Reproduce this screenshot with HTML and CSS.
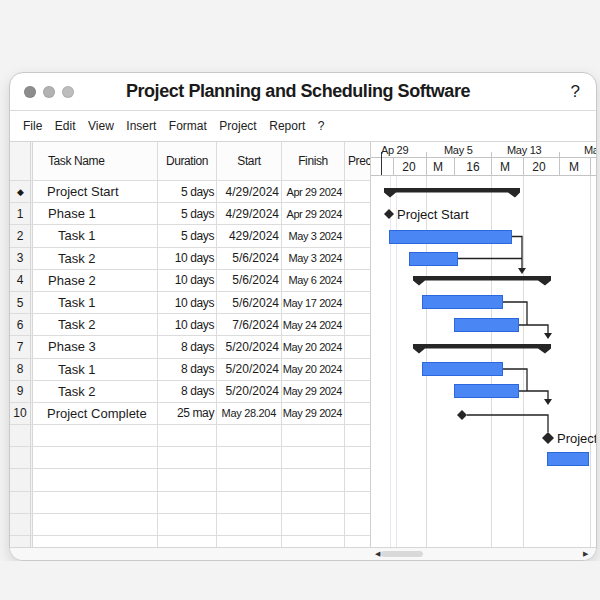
FILE: index.html
```html
<!DOCTYPE html>
<html lang="en">
<head>
  <meta charset="UTF-8">
  <title>Project Planning and Scheduling Software</title>
  <link rel="stylesheet" href="styles.css">
</head>
<body>
  <div class="window">
    <div class="titlebar">
      <div class="lights">
        <span class="dot dot-1"></span>
        <span class="dot dot-2"></span>
        <span class="dot dot-3"></span>
      </div>
      <div class="title">Project Planning and Scheduling Software</div>
      <div class="help">?</div>
    </div>

    <div class="menubar">
      <span>File</span>
      <span>Edit</span>
      <span>View</span>
      <span>Insert</span>
      <span>Format</span>
      <span>Project</span>
      <span>Report</span>
      <span>?</span>
    </div>

    <div class="main">
      <!-- task sheet -->
      <div class="sheet">
        <div class="row head">
          <div class="c num"></div>
          <div class="c name">Task Name</div>
          <div class="c ctr">Duration</div>
          <div class="c ctr">Start</div>
          <div class="c ctr">Finish</div>
          <div class="c prec">Prec</div>
        </div>
        <div class="row">
          <div class="c num"><span class="mark">◆</span></div>
          <div class="c name l0">Project Start</div>
          <div class="c dur">5 days</div>
          <div class="c start">4/29/2024</div>
          <div class="c fin">Apr 29 2024</div>
          <div class="c prec"></div>
        </div>
        <div class="row">
          <div class="c num">1</div>
          <div class="c name l1">Phase 1</div>
          <div class="c dur">5 days</div>
          <div class="c start">4/29/2024</div>
          <div class="c fin">Apr 29 2024</div>
          <div class="c prec"></div>
        </div>
        <div class="row">
          <div class="c num">2</div>
          <div class="c name l2">Task 1</div>
          <div class="c dur">5 days</div>
          <div class="c start">429/2024</div>
          <div class="c fin">May 3 2024</div>
          <div class="c prec"></div>
        </div>
        <div class="row">
          <div class="c num">3</div>
          <div class="c name l2">Task 2</div>
          <div class="c dur">10 days</div>
          <div class="c start">5/6/2024</div>
          <div class="c fin">May 3 2024</div>
          <div class="c prec"></div>
        </div>
        <div class="row">
          <div class="c num">4</div>
          <div class="c name l1">Phase 2</div>
          <div class="c dur">10 days</div>
          <div class="c start">5/6/2024</div>
          <div class="c fin">May 6 2024</div>
          <div class="c prec"></div>
        </div>
        <div class="row">
          <div class="c num">5</div>
          <div class="c name l2">Task 1</div>
          <div class="c dur">10 days</div>
          <div class="c start">5/6/2024</div>
          <div class="c fin">May 17 2024</div>
          <div class="c prec"></div>
        </div>
        <div class="row">
          <div class="c num">6</div>
          <div class="c name l2">Task 2</div>
          <div class="c dur">10 days</div>
          <div class="c start">7/6/2024</div>
          <div class="c fin">May 24 2024</div>
          <div class="c prec"></div>
        </div>
        <div class="row">
          <div class="c num">7</div>
          <div class="c name l1">Phase 3</div>
          <div class="c dur">8 days</div>
          <div class="c start">5/20/2024</div>
          <div class="c fin">May 20 2024</div>
          <div class="c prec"></div>
        </div>
        <div class="row">
          <div class="c num">8</div>
          <div class="c name l2">Task 1</div>
          <div class="c dur">8 days</div>
          <div class="c start">5/20/2024</div>
          <div class="c fin">May 20 2024</div>
          <div class="c prec"></div>
        </div>
        <div class="row">
          <div class="c num">9</div>
          <div class="c name l2">Task 2</div>
          <div class="c dur">8 days</div>
          <div class="c start">5/20/2024</div>
          <div class="c fin">May 29 2024</div>
          <div class="c prec"></div>
        </div>
        <div class="row">
          <div class="c num">10</div>
          <div class="c name l0">Project Complete</div>
          <div class="c dur">25 may</div>
          <div class="c start small">May 28.204</div>
          <div class="c fin">May 29 2024</div>
          <div class="c prec"></div>
        </div>
        <div class="row"><div class="c num"></div><div class="c name"></div><div class="c dur"></div><div class="c start"></div><div class="c fin"></div><div class="c prec"></div></div>
        <div class="row"><div class="c num"></div><div class="c name"></div><div class="c dur"></div><div class="c start"></div><div class="c fin"></div><div class="c prec"></div></div>
        <div class="row"><div class="c num"></div><div class="c name"></div><div class="c dur"></div><div class="c start"></div><div class="c fin"></div><div class="c prec"></div></div>
        <div class="row"><div class="c num"></div><div class="c name"></div><div class="c dur"></div><div class="c start"></div><div class="c fin"></div><div class="c prec"></div></div>
        <div class="row"><div class="c num"></div><div class="c name"></div><div class="c dur"></div><div class="c start"></div><div class="c fin"></div><div class="c prec"></div></div>
        <div class="row"><div class="c num"></div><div class="c name"></div><div class="c dur"></div><div class="c start"></div><div class="c fin"></div><div class="c prec"></div></div>
      </div>

      <!-- gantt chart -->
      <div class="gantt">
        <svg width="226" height="405" viewBox="0 0 226 405">
          <!-- timescale -->
          <g class="scale-top">
            <text x="10" y="12">Ap 29</text>
            <text x="73" y="12">May 5</text>
            <text x="136" y="12">May 13</text>
            <text x="213" y="12">Ma</text>
          </g>
          <g stroke="#c4c4c4" stroke-width="1">
            <line x1="0" y1="15.5" x2="226" y2="15.5"/>
            <line x1="0" y1="33.5" x2="226" y2="33.5"/>
            <line x1="55.5" y1="10" x2="55.5" y2="33"/>
            <line x1="120.5" y1="10" x2="120.5" y2="33"/>
            <line x1="188.5" y1="10" x2="188.5" y2="33"/>
            <line x1="22.5" y1="16" x2="22.5" y2="33"/>
            <line x1="83.5" y1="16" x2="83.5" y2="33"/>
            <line x1="152.5" y1="16" x2="152.5" y2="33"/>
            <line x1="219.5" y1="16" x2="219.5" y2="33"/>
          </g>
          <line x1="10.5" y1="10" x2="10.5" y2="33" stroke="#333" stroke-width="1"/>
          <g class="scale-bot" text-anchor="middle">
            <text x="38" y="29">20</text>
            <text x="67" y="29">M</text>
            <text x="102" y="29">16</text>
            <text x="134" y="29">M</text>
            <text x="168" y="29">20</text>
            <text x="203" y="29">M</text>
          </g>

          <!-- grid -->
          <g stroke-width="1">
            <line x1="19.5" y1="34" x2="19.5" y2="405" stroke="#e6e8ee"/>
            <line x1="25.5" y1="34" x2="25.5" y2="405" stroke="#e6e8ee"/>
            <line x1="55.5" y1="34" x2="55.5" y2="405" stroke="#dcdcdc"/>
            <line x1="120.5" y1="34" x2="120.5" y2="405" stroke="#dcdcdc"/>
            <line x1="152.5" y1="34" x2="152.5" y2="405" stroke="#dcdcdc"/>
            <line x1="219.5" y1="34" x2="219.5" y2="405" stroke="#dcdcdc"/>
          </g>

          <!-- summaries -->
          <g fill="#262626">
            <path d="M13 46 H149 V50.5 L144 55.5 L137 50.5 H25 L19 55.5 L13 50.5 Z"/>
            <path d="M42 134 H180 V138.5 L174 143.5 L167 138.5 H54 L48 143.5 L42 138.5 Z"/>
            <path d="M42 202 H180 V206.5 L174 211.5 L167 206.5 H54 L48 211.5 L42 206.5 Z"/>
          </g>

          <!-- milestones -->
          <path d="M18 67 L23 72 L18 77 L13 72 Z" fill="#262626"/>
          <text class="lbl" x="26" y="77">Project Start</text>

          <!-- links -->
          <g fill="none" stroke="#222" stroke-width="1.3">
            <path d="M141 94.5 H151 V127"/>
            <path d="M87 116.5 H151"/>
            <path d="M132 160 H156 V183"/>
            <path d="M148 183 H177 V192"/>
            <path d="M132 227 H156 V249"/>
            <path d="M148 249 H177 V258"/>
            <path d="M96 273 H177 V290"/>
          </g>
          <g fill="#222">
            <path d="M147 126 H155 L151 132 Z"/>
            <path d="M173 191 H181 L177 197 Z"/>
            <path d="M173 257 H181 L177 263 Z"/>
          </g>

          <!-- task bars -->
          <g fill="#4a86f4" stroke="#2b68de" stroke-width="1">
            <rect x="18.5" y="88.5" width="122" height="13"/>
            <rect x="38.5" y="110.5" width="48" height="13"/>
            <rect x="51.5" y="153.5" width="80" height="13"/>
            <rect x="83.5" y="176.5" width="64" height="13"/>
            <rect x="51.5" y="220.5" width="80" height="13"/>
            <rect x="83.5" y="242.5" width="64" height="13"/>
            <rect x="176.5" y="310.5" width="41" height="13"/>
          </g>

          <path d="M91 268 L96 273 L91 278 L86 273 Z" fill="#262626"/>
          <path d="M177 290 L183 296 L177 302 L171 296 Z" fill="#262626"/>
          <text class="lbl" x="186" y="301">Project</text>
        </svg>
      </div>
    </div>

    <div class="footer">
      <div class="footer-left"></div>
      <div class="hscroll">
        <span class="arrow">◀</span>
        <span class="thumb"></span>
        <span class="track"></span>
        <span class="arrow">▶</span>
      </div>
    </div>
  </div>
</body>
</html>
```

FILE: styles.css
```css
body {
  margin: 0;
  background: #f3f3f3;
  font-family: "Liberation Sans", Arial, sans-serif;
  color: #1b1b1b;
}
.window {
  box-sizing: border-box;
  width: 588px;
  height: 489px;
  margin: 72px 0 0 9px;
  background: #fff;
  border: 1px solid #c9c9c9;
  border-radius: 14px;
  box-shadow: 0 5px 14px rgba(0, 0, 0, 0.13);
  overflow: hidden;
  display: flex;
  flex-direction: column;
}

/* title bar */
.titlebar {
  box-sizing: border-box;
  height: 38px;
  border-bottom: 1px solid #dadada;
  display: grid;
  grid-template-columns: 76px 1fr 86px;
  align-items: center;
  flex-shrink: 0;
}
.lights {
  display: flex;
  gap: 7px;
  padding-left: 14px;
}
.dot {
  width: 12px;
  height: 12px;
  border-radius: 50%;
  box-shadow: inset 0 0 0 1px rgba(0, 0, 0, 0.08);
}
.dot-1 { background: #8d8d8d; }
.dot-2 { background: #b2b2b2; }
.dot-3 { background: #bdbdbd; }
.title {
  text-align: center;
  font-size: 18px;
  font-weight: bold;
  letter-spacing: -0.45px;
  color: #1a1a1a;
}
.help {
  text-align: right;
  padding-right: 16px;
  font-size: 17px;
  color: #222;
}

/* menu */
.menubar {
  box-sizing: border-box;
  height: 31px;
  border-bottom: 1px solid #d6d6d6;
  display: flex;
  align-items: center;
  gap: 12.5px;
  padding-left: 13px;
  font-size: 12px;
  color: #222;
  flex-shrink: 0;
}

/* main split */
.main {
  height: 405px;
  display: flex;
  overflow: hidden;
  flex-shrink: 0;
}
.sheet {
  width: 360px;
  overflow: hidden;
  flex-shrink: 0;
}
.row {
  box-sizing: border-box;
  display: grid;
  grid-template-columns: 23px 125px 59px 65px 63px 60px;
  width: 395px;
  height: 22.2px;
  border-bottom: 1px solid #dcdcdc;
  font-size: 12px;
}
.row.head {
  height: 39px;
  background: #fcfcfc;
  letter-spacing: -0.4px;
}
.c {
  box-sizing: border-box;
  border-right: 1px solid #dcdcdc;
  display: flex;
  align-items: center;
  white-space: nowrap;
  overflow: hidden;
}
.c.num {
  justify-content: center;
  background: #f3f3f3;
  border-right: 3px double #d6d6d6;
  font-size: 12px;
}
.mark {
  font-size: 9px;
}
.head .c.num {
  background: #f5f5f5;
}
.name {
  font-size: 13px;
  padding-left: 14px;
}
.head .name {
  font-size: 12px;
  padding-left: 15px;
}
.name.l1 { padding-left: 15px; }
.name.l2 { padding-left: 25px; }
.ctr {
  justify-content: center;
}
.dur {
  justify-content: flex-end;
  padding-right: 2px;
  letter-spacing: -0.4px;
}
.start {
  justify-content: flex-end;
  padding-right: 2px;
}
.start.small {
  font-size: 11px;
  letter-spacing: -0.3px;
  padding-right: 5px;
}
.fin {
  justify-content: flex-end;
  padding-right: 2px;
  font-size: 11px;
  letter-spacing: -0.4px;
}
.prec {
  padding-left: 3px;
}
.head .prec {
  font-size: 12px;
}

/* gantt */
.gantt {
  width: 226px;
  border-left: 1px solid #cfcfcf;
  flex-shrink: 0;
  overflow: hidden;
}
.gantt svg {
  display: block;
  font-family: "Liberation Sans", Arial, sans-serif;
}
.scale-top {
  font-size: 11px;
  letter-spacing: -0.3px;
  fill: #222;
}
.scale-bot {
  font-size: 12px;
  fill: #222;
}
.lbl {
  font-size: 13px;
  fill: #151515;
}

/* footer / scrollbar */
.footer {
  flex: 1;
  display: flex;
  border-top: 1px solid #d6d6d6;
  background: #f8f8f8;
}
.footer-left {
  width: 360px;
  flex-shrink: 0;
}
.hscroll {
  flex: 1;
  display: flex;
  align-items: center;
  padding: 0 8px 0 5px;
  gap: 1px;
}
.arrow {
  font-size: 7px;
  color: #333;
}
.thumb {
  width: 42px;
  height: 6px;
  border-radius: 3px;
  background: #d9d9d9;
}
.track {
  flex: 1;
}
```
